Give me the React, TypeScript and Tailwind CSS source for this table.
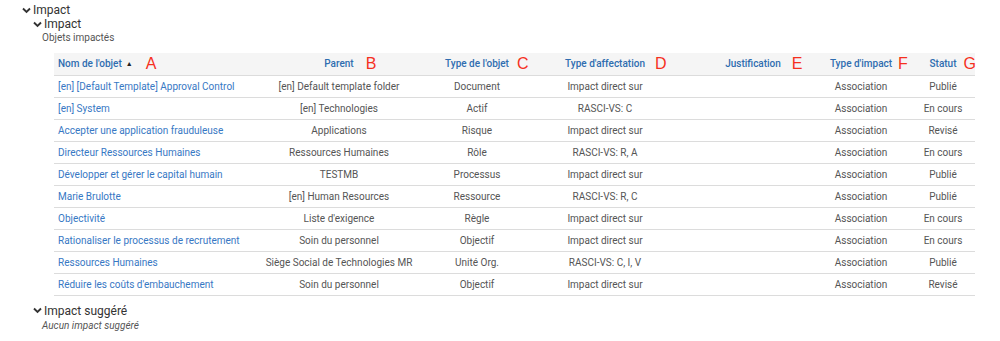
import React from "react";

const Chevron = () => (
  <svg width="9" height="7" viewBox="0 0 9 7" className="shrink-0">
    <polyline points="1,1.5 4.5,5 8,1.5" fill="none" stroke="#333" strokeWidth="1.9" />
  </svg>
);

type Row = [string, string, string, string, string, string, string];

const rows: Row[] = [
  ["[en] [Default Template] Approval Control", "[en] Default template folder", "Document", "Impact direct sur", "", "Association", "Publié"],
  ["[en] System", "[en] Technologies", "Actif", "RASCI-VS: C", "", "Association", "En cours"],
  ["Accepter une application frauduleuse", "Applications", "Risque", "Impact direct sur", "", "Association", "Revisé"],
  ["Directeur Ressources Humaines", "Ressources Humaines", "Rôle", "RASCI-VS: R, A", "", "Association", "En cours"],
  ["Développer et gérer le capital humain", "TESTMB", "Processus", "Impact direct sur", "", "Association", "Publié"],
  ["Marie Brulotte", "[en] Human Resources", "Ressource", "RASCI-VS: R, C", "", "Association", "Publié"],
  ["Objectivité", "Liste d'exigence", "Règle", "Impact direct sur", "", "Association", "En cours"],
  ["Rationaliser le processus de recrutement", "Soin du personnel", "Objectif", "Impact direct sur", "", "Association", "En cours"],
  ["Ressources Humaines", "Siège Social de Technologies MR", "Unité Org.", "RASCI-VS: C, I, V", "", "Association", "Publié"],
  ["Réduire les coûts d'embauchement", "Soin du personnel", "Objectif", "Impact direct sur", "", "Association", "Revisé"],
];

const Letter = ({ ch, ml }: { ch: string; ml: string }) => (
  <span
    className={`absolute left-full top-1/2 -translate-y-1/2 ${ml} text-[16px] leading-none text-[#f5301e] font-normal`}
    style={{ fontFamily: '"Liberation Sans", Arial, sans-serif' }}
  >
    {ch}
  </span>
);

export default function App() {
  return (
    <div
      className="w-[1000px] h-[341px] bg-white text-[#333] overflow-hidden"
      style={{ fontFamily: 'Roboto, "Noto Sans", sans-serif' }}
    >
      <div className="pl-[22px] pt-[3px]">
        <div className="flex items-center gap-[2px] h-[14px] text-[12px] leading-none">
          <Chevron />
          <span>Impact</span>
        </div>
        <div className="pl-[11px] mt-0">
          <div className="flex items-center gap-[2px] h-[14px] text-[12px] leading-none">
            <Chevron />
            <span>Impact</span>
          </div>
          <div className="pl-[9px] text-[10px] leading-none text-[#555] mt-[2px]">Objets impactés</div>
          <div className="pl-[21px] mt-[10px]">
            <table className="table-fixed border-collapse w-[921px] text-[10px]">
              <colgroup>
                <col className="w-[185px]" />
                <col className="w-[200px]" />
                <col className="w-[76px]" />
                <col className="w-[180px]" />
                <col className="w-[116px]" />
                <col className="w-[100px]" />
                <col className="w-[64px]" />
              </colgroup>
              <thead>
                <tr className="bg-[#f5f5f5] h-[22px] border-b border-[#dcdcdc] text-[#2f6db0] font-medium">
                  <th className="text-left px-[4px] font-medium">
                    <span className="relative inline-flex items-center">
                      Nom de l'objet
                      <span className="ml-[4px] text-[7px] text-[#222]">▲</span>
                      <Letter ch="A" ml="ml-[13px]" />
                    </span>
                  </th>
                  <th className="text-center font-medium">
                    <span className="relative">
                      Parent
                      <Letter ch="B" ml="ml-[12px]" />
                    </span>
                  </th>
                  <th className="text-center font-medium">
                    <span className="relative">
                      Type de l'objet
                      <Letter ch="C" ml="ml-[8px]" />
                    </span>
                  </th>
                  <th className="text-center font-medium">
                    <span className="relative">
                      Type d'affectation
                      <Letter ch="D" ml="ml-[10px]" />
                    </span>
                  </th>
                  <th className="text-center font-medium">
                    <span className="relative">
                      Justification
                      <Letter ch="E" ml="ml-[11px]" />
                    </span>
                  </th>
                  <th className="text-center font-medium">
                    <span className="relative">
                      Type d'impact
                      <Letter ch="F" ml="ml-[6px]" />
                    </span>
                  </th>
                  <th className="text-center font-medium">
                    <span className="relative">
                      Statut
                      <Letter ch="G" ml="ml-[7px]" />
                    </span>
                  </th>
                </tr>
              </thead>
              <tbody>
                {rows.map((r, i) => (
                  <tr key={i} className="h-[22px] border-b border-[#dcdcdc]">
                    <td className="px-[4px] text-left text-[#3778c4] whitespace-nowrap">{r[0]}</td>
                    {r.slice(1).map((c, j) => (
                      <td key={j} className="text-center text-[#555] whitespace-nowrap">
                        {c}
                      </td>
                    ))}
                  </tr>
                ))}
              </tbody>
            </table>
          </div>
          <div className="flex items-center gap-[2px] h-[14px] text-[12px] leading-none mt-[8px]">
            <Chevron />
            <span>Impact suggéré</span>
          </div>
          <div className="pl-[9px] text-[10px] leading-none italic text-[#555] mt-[3px]">Aucun impact suggéré</div>
        </div>
      </div>
    </div>
  );
}
